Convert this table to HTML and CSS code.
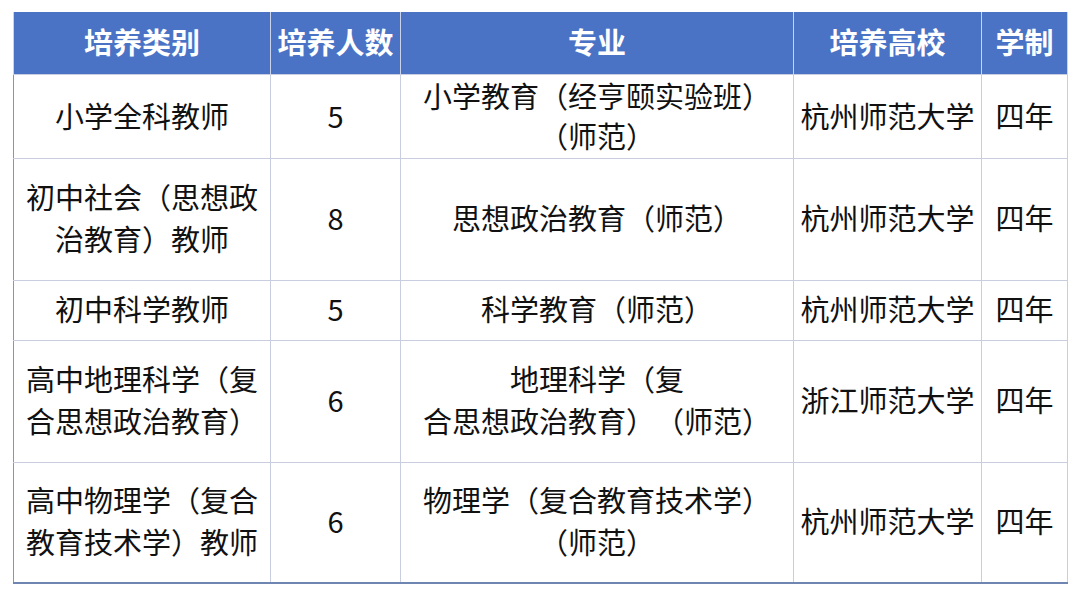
FILE: index.html
```html
<!DOCTYPE html>
<html lang="zh-CN">
<head>
<meta charset="utf-8">
<link rel="stylesheet" href="styles.css">
</head>
<body>
<div class="wrap">
<table class="plan">
  <colgroup>
    <col class="c1"><col class="c2"><col class="c3"><col class="c4"><col class="c5">
  </colgroup>
  <thead>
    <tr class="head">
      <th>培养类别</th><th>培养人数</th><th>专业</th><th>培养高校</th><th>学制</th>
    </tr>
  </thead>
  <tbody>
    <tr class="r1">
      <td>小学全科教师</td><td>5</td><td>小学教育（经亨颐实验班）<br>（师范）</td><td>杭州师范大学</td><td>四年</td>
    </tr>
    <tr class="r2">
      <td>初中社会（思想政<br>治教育）教师</td><td>8</td><td>思想政治教育（师范）</td><td>杭州师范大学</td><td>四年</td>
    </tr>
    <tr class="r3">
      <td>初中科学教师</td><td>5</td><td>科学教育（师范）</td><td>杭州师范大学</td><td>四年</td>
    </tr>
    <tr class="r4">
      <td>高中地理科学（复<br>合思想政治教育）</td><td>6</td><td>地理科学（复<br>合思想政治教育）（师范）</td><td>浙江师范大学</td><td>四年</td>
    </tr>
    <tr class="r5">
      <td>高中物理学（复合<br>教育技术学）教师</td><td>6</td><td>物理学（复合教育技术学）<br>（师范）</td><td>杭州师范大学</td><td>四年</td>
    </tr>
  </tbody>
</table>
</div>
</body>
</html>
```

FILE: styles.css
```css
html, body {
  margin: 0;
  padding: 0;
  background: #ffffff;
}
.wrap {
  padding: 12px 13px 0 13px;
}
.plan {
  width: 1054px;
  border-collapse: collapse;
  table-layout: fixed;
  font-family: "Noto Sans CJK SC", "Noto Sans", sans-serif;
  font-size: 29px;
  line-height: 42px;
  color: #111111;
  text-spacing-trim: space-all;
  border-left: 1px solid #8496b8;
  border-bottom: 2px solid #6f86b3;
}
.c1 { width: 257px; }
.c2 { width: 130px; }
.c3 { width: 393px; }
.c4 { width: 188px; }
.c5 { width: 86px; }
.plan th {
  background: #4a73c6;
  color: #ffffff;
  font-weight: 700;
  padding: 0 0 4px 0;
  text-align: center;
  vertical-align: middle;
  border-left: 1px solid #c9d3ea;
  border-right: 1px solid #c9d3ea;
}
.plan td {
  padding: 0 0 5px 0;
  text-align: center;
  vertical-align: middle;
  border: 1px solid #c8cee0;
  white-space: nowrap;
}
.plan td:first-child { border-left: 1px solid #8496b8; }
.head { height: 62px; }
.r1 { height: 84px; }
.r1 td { line-height: 40px; padding-bottom: 3px; }
.r2 { height: 122px; }
.r3 { height: 60px; }
.r4 { height: 122px; }
.r5 { height: 121px; }
```
